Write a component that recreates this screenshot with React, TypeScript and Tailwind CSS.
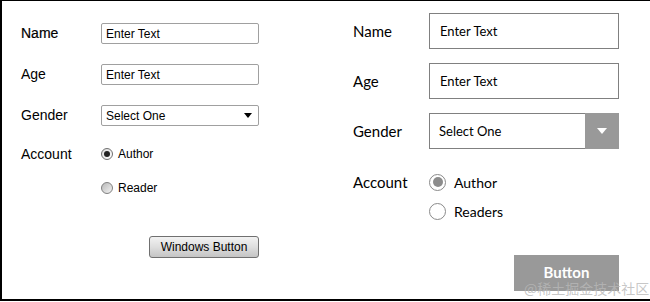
import React from "react";

const L = { fontFamily: '"Liberation Sans", Arial, sans-serif' };
const R = { fontFamily: 'Lato, "Noto Sans", sans-serif' };

function LeftRow({ label, bold, children, className }: { label: string; bold?: boolean; children?: React.ReactNode; className?: string }) {
  return (
    <div className={"flex items-center " + (className || "")}>
      <div className={"w-[80px] text-[14px] text-black " + (bold ? "[-webkit-text-stroke:0.2px_black]" : "")}>{label}</div>
      {children}
    </div>
  );
}

function RightRow({ label, children, className }: { label: string; children?: React.ReactNode; className?: string }) {
  return (
    <div className={"flex items-center " + (className || "")}>
      <div className="w-[76px] text-[15px] text-black">{label}</div>
      {children}
    </div>
  );
}

export default function App() {
  return (
    <div className="relative w-[650px] h-[302px] bg-white overflow-hidden">
      <div className="flex w-[650px] h-[301px] border-l-2 border-t border-b-2 border-black">
        {/* Left panel */}
        <div className="w-[351px] pl-[19px] pt-[22px] flex flex-col" style={L}>
          <LeftRow label="Name" bold className="h-[21px]">
            <div className="w-[158px] h-[21px] border border-[#a0a0a0] rounded-[2px] flex items-center pl-[4px] text-[12px] text-black">Enter Text</div>
          </LeftRow>
          <LeftRow label="Age" className="h-[21px] mt-[20px]">
            <div className="w-[158px] h-[21px] border border-[#a0a0a0] rounded-[2px] flex items-center pl-[4px] text-[12px] text-black">Enter Text</div>
          </LeftRow>
          <LeftRow label="Gender" className="h-[21px] mt-[20px]">
            <div className="w-[158px] h-[21px] border border-[#a0a0a0] rounded-[2px] flex items-center justify-between pl-[4px] pr-[6px] text-[12px] text-black">
              <span>Select One</span>
              <svg width="8" height="5" viewBox="0 0 8 5"><path d="M0 0H8L4 5Z" fill="#000" /></svg>
            </div>
          </LeftRow>
          <LeftRow label="Account" className="h-[20px] mt-[18px]">
            <div className="flex items-center">
              <span className="w-[12px] h-[12px] rounded-full border border-[#707070] bg-gradient-to-br from-[#dcdcdc] to-[#ffffff] flex items-center justify-center">
                <span className="w-[6px] h-[6px] rounded-full bg-[#222]" />
              </span>
              <span className="ml-[5px] text-[12px] text-black">Author</span>
            </div>
          </LeftRow>
          <div className="flex items-center h-[20px] mt-[14px] pl-[80px]">
            <span className="w-[12px] h-[12px] rounded-full border border-[#808080] bg-gradient-to-br from-[#b8b8b8] to-[#f4f4f4]" />
            <span className="ml-[5px] text-[12px] text-black">Reader</span>
          </div>
          <div className="mt-[38px] pl-[128px]">
            <div className="w-[110px] h-[22px] border border-[#707070] rounded-[3px] bg-gradient-to-b from-[#f2f2f2] via-[#dedede] to-[#c4c4c4] flex items-center justify-center text-[12px] text-black">
              Windows Button
            </div>
          </div>
        </div>

        {/* Right panel */}
        <div className="flex-1 pt-[12px] flex flex-col" style={R}>
          <RightRow label="Name" className="h-[36px]">
            <div className="w-[190px] h-[36px] border border-[#808080] flex items-center pl-[10px] pt-[2px] text-[13px] text-black">Enter Text</div>
          </RightRow>
          <RightRow label="Age" className="h-[36px] mt-[14px]">
            <div className="w-[190px] h-[36px] border border-[#808080] flex items-center pl-[10px] pt-[2px] text-[13px] text-black">Enter Text</div>
          </RightRow>
          <RightRow label="Gender" className="h-[36px] mt-[14px]">
            <div className="w-[190px] h-[36px] border border-[#808080] flex">
              <div className="flex-1 flex items-center pl-[9px] pt-[2px] text-[13px] text-black">Select One</div>
              <div className="w-[34px] -my-px -mr-px bg-[#999999] flex items-center justify-center">
                <svg width="10" height="6" viewBox="0 0 10 6"><path d="M0 0H10L5 6Z" fill="#fff" /></svg>
              </div>
            </div>
          </RightRow>
          <RightRow label="Account" className="h-[20px] mt-[23px]">
            <div className="flex items-center">
              <span className="w-[17px] h-[17px] rounded-full border border-[#8a8a8a] flex items-center justify-center">
                <span className="w-[10px] h-[10px] rounded-full bg-[#8c8c8c]" />
              </span>
              <span className="ml-[8px] text-[14px] text-black">Author</span>
            </div>
          </RightRow>
          <div className="flex items-center h-[20px] mt-[9px] pl-[76px]">
            <span className="w-[17px] h-[17px] rounded-full border border-[#8a8a8a]" />
            <span className="ml-[8px] text-[14px] text-black">Readers</span>
          </div>
          <div className="mt-[34px] pl-[161px]">
            <div className="w-[105px] h-[36px] bg-[#999999] flex items-start justify-center pt-[6px] text-[15px] font-bold text-white">
              Button
            </div>
          </div>
        </div>
      </div>
      <div
        className="absolute left-[524px] top-[279px] text-[14px] leading-[18px] text-[#b8b8b8]/80"
        style={{ fontFamily: '"Noto Sans CJK SC", sans-serif' }}
      >
        @稀土掘金技术社区
      </div>
    </div>
  );
}
